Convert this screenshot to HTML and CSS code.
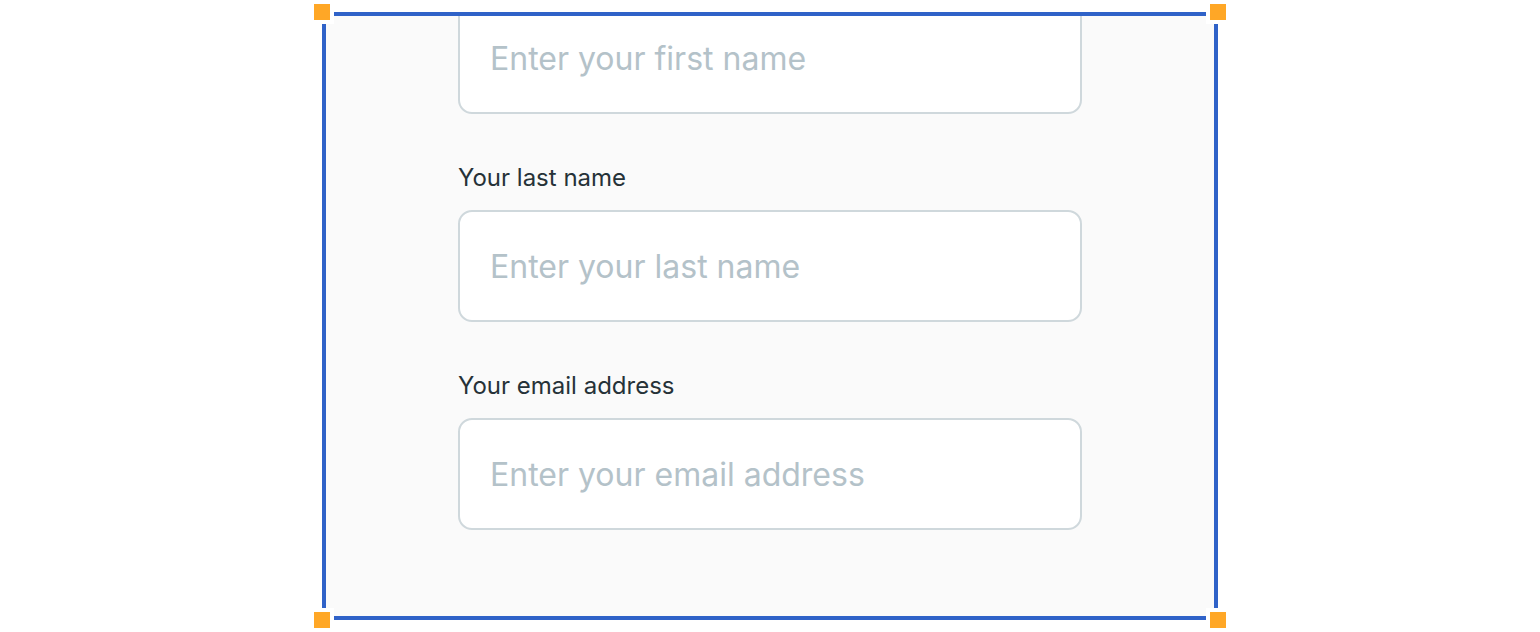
FILE: index.html
```html
<!DOCTYPE html>
<html lang="en">
  <head>
    <meta charset="UTF-8" />
    <meta name="viewport" content="width=device-width, initial-scale=1.0" />
    <title>Sign up form</title>
    <link rel="stylesheet" href="styles.css">
  </head>
  <body>
    <div class="stage">
      <div class="frame">
        <span class="handle handle-tl"></span>
        <span class="handle handle-tr"></span>
        <span class="handle handle-bl"></span>
        <span class="handle handle-br"></span>

        <div class="viewport">
          <form class="signup-form">
            <div class="form-group">
              <label class="form-label" for="firstName">Your first name</label>
              <input
                type="text"
                id="firstName"
                class="form-input"
                placeholder="Enter your first name"
              />
            </div>
            <div class="form-group">
              <label class="form-label" for="lastName">Your last name</label>
              <input
                type="text"
                id="lastName"
                class="form-input"
                placeholder="Enter your last name"
              />
            </div>
            <div class="form-group">
              <label class="form-label" for="email">Your email address</label>
              <input
                type="email"
                id="email"
                class="form-input"
                placeholder="Enter your email address"
              />
            </div>
          </form>
        </div>
      </div>
    </div>
  </body>
</html>
```

FILE: styles.css
```css
:root {
  --select: #2f62c8;
  --handle: #ffa726;
  --dark: #263238;
  --muted: #b4c2c9;
  --line: #cfd8dc;
}

* {
  box-sizing: border-box;
}

html,
body {
  margin: 0;
  height: 100%;
  overflow: hidden;
}

body {
  font-family: "Inter", sans-serif;
  background-color: #ffffff;
}

.stage {
  height: 632px;
  padding-top: 12px;
}

.frame {
  position: relative;
  width: 896px;
  height: 608px;
  margin: 0 auto;
  border: 4px solid var(--select);
}

.handle {
  position: absolute;
  width: 24px;
  height: 24px;
  background-color: var(--handle);
  border: 4px solid #ffffff;
  z-index: 2;
}

.handle-tl {
  top: -16px;
  left: -16px;
}

.handle-tr {
  top: -16px;
  right: -16px;
}

.handle-bl {
  bottom: -16px;
  left: -16px;
}

.handle-br {
  bottom: -16px;
  right: -16px;
}

.viewport {
  height: 100%;
  overflow: hidden;
  background-color: #fafafa;
}

.signup-form {
  width: 624px;
  margin: -62px auto 0;
  display: flex;
  flex-direction: column;
  gap: 48px;
}

.form-group {
  display: flex;
  flex-direction: column;
  gap: 16px;
}

.form-label {
  font-size: 24px;
  line-height: 32px;
  color: var(--dark);
}

.form-input {
  width: 100%;
  height: 112px;
  padding: 0 30px;
  border: 2px solid var(--line);
  border-radius: 14px;
  background-color: #ffffff;
  font-family: "Inter", sans-serif;
  font-size: 32px;
  color: var(--dark);
}

.form-input::placeholder {
  color: var(--muted);
}

.form-input:focus {
  outline: none;
  border-color: var(--select);
}
```
